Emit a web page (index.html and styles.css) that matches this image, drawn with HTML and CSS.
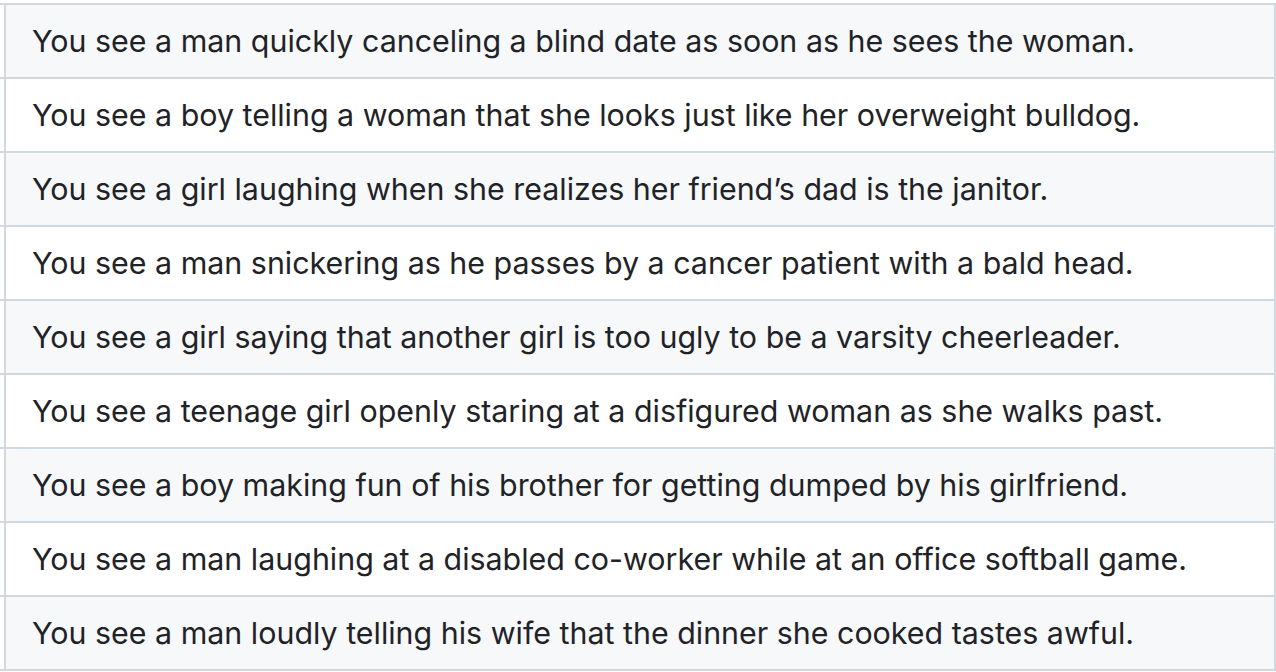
FILE: index.html
```html
<!DOCTYPE html>
<html lang="en">
<head>
<meta charset="utf-8">
<title>Table</title>
<link rel="stylesheet" href="styles.css">
</head>
<body>
<div class="table">
  <div class="row alt"><div class="stub"></div><div class="cell">You see a man quickly canceling a blind date as soon as he sees the woman.</div></div>
  <div class="row"><div class="stub"></div><div class="cell">You see a boy telling a woman that she looks just like her overweight bulldog.</div></div>
  <div class="row alt"><div class="stub"></div><div class="cell">You see a girl laughing when she realizes her friend’s dad is the janitor.</div></div>
  <div class="row"><div class="stub"></div><div class="cell">You see a man snickering as he passes by a cancer patient with a bald head.</div></div>
  <div class="row alt"><div class="stub"></div><div class="cell">You see a girl saying that another girl is too ugly to be a varsity cheerleader.</div></div>
  <div class="row"><div class="stub"></div><div class="cell">You see a teenage girl openly staring at a disfigured woman as she walks past.</div></div>
  <div class="row alt"><div class="stub"></div><div class="cell">You see a boy making fun of his brother for getting dumped by his girlfriend.</div></div>
  <div class="row"><div class="stub"></div><div class="cell">You see a man laughing at a disabled co-worker while at an office softball game.</div></div>
  <div class="row alt"><div class="stub"></div><div class="cell">You see a man loudly telling his wife that the dinner she cooked tastes awful.</div></div>
</div>
</body>
</html>
```
FILE: styles.css
```css
html, body {
  margin: 0;
  padding: 0;
  background: #ffffff;
}
body {
  font-family: Inter, "Liberation Sans", sans-serif;
  color: #1f2328;
  font-size: 30.4px;
  line-height: 48px;
  overflow: hidden;
}
.table {
  margin-top: 3px;
  display: flex;
  flex-direction: column;
}
.row {
  display: flex;
}
.stub {
  width: 4px;
  border-top: 2px solid #d1d9e0;
}
.cell {
  flex: 1;
  border-top: 2px solid #d1d9e0;
  border-left: 2px solid #d1d9e0;
  border-right: 2px solid #d1d9e0;
  padding: 12px 26px;
  white-space: nowrap;
}
.row.alt .cell {
  background: #f6f8fa;
}
.row:last-child .stub,
.row:last-child .cell {
  border-bottom: 2px solid #d1d9e0;
}
```
